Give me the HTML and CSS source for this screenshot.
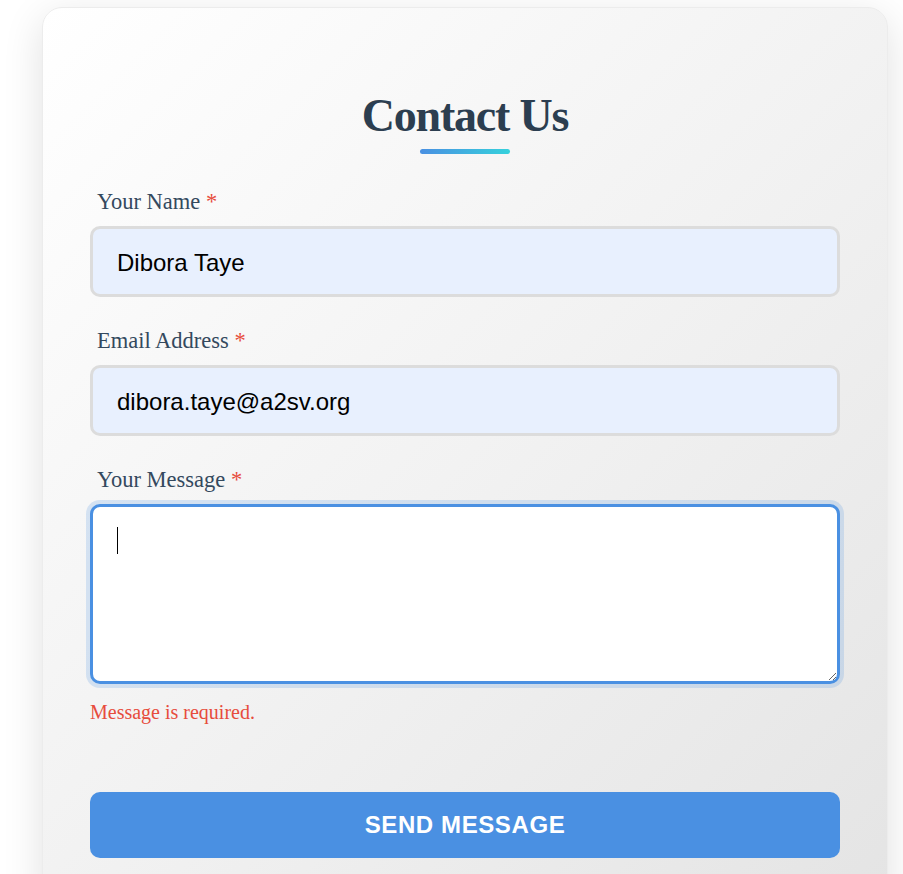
FILE: index.html
```html
<!DOCTYPE html>
<html lang="en">
<head>
<meta charset="utf-8">
<title>Contact Us</title>
<link rel="stylesheet" href="styles.css">
</head>
<body>
<div class="page">
  <div class="card">
    <h1 class="title">Contact Us</h1>
    <div class="title-bar"></div>
    <form class="form" novalidate>
      <div class="group">
        <label class="label" for="name">Your Name <span class="req">*</span></label>
        <input class="field autofilled" id="name" type="text" value="Dibora Taye">
      </div>
      <div class="group">
        <label class="label" for="email">Email Address <span class="req">*</span></label>
        <input class="field autofilled" id="email" type="email" value="dibora.taye@a2sv.org">
      </div>
      <div class="group group-msg">
        <label class="label" for="msg">Your Message <span class="req">*</span></label>
        <div class="area-wrap">
          <textarea class="field area focused" id="msg"></textarea>
          <span class="caret"></span>
        </div>
        <p class="error">Message is required.</p>
      </div>
      <button class="btn" type="button">SEND MESSAGE</button>
    </form>
  </div>
</div>
</body>
</html>
```
FILE: styles.css
```css
* { box-sizing: border-box; }
html, body { margin: 0; padding: 0; background: #ffffff; overflow: hidden; }
.page {
  padding: 7px 15px 0 42px;
  height: 874px;
}
.card {
  width: 846px;
  height: 900px;
  border-radius: 20px;
  background: linear-gradient(135deg, #ffffff 0%, #f2f2f2 50%, #e4e4e4 100%);
  box-shadow: 0 10px 40px rgba(0, 0, 0, 0.12);
  border: 1px solid #ececec;
  padding: 80px 47px 0 47px;
}
.title {
  margin: 0;
  text-align: center;
  font-family: "Liberation Serif", "Times New Roman", serif;
  font-weight: bold;
  font-size: 46px;
  letter-spacing: -1.2px;
  line-height: 55px;
  color: #2c3e50;
}
.title-bar {
  width: 90px;
  height: 5px;
  margin: 6px auto 0;
  border-radius: 3px;
  background: linear-gradient(90deg, #4a90e2, #36d1dc);
}
.form { margin-top: 35px; }
.group { margin-bottom: 31px; }
.label {
  display: block;
  padding-left: 7px;
  margin-bottom: 12px;
  font-family: "Liberation Serif", "Times New Roman", serif;
  font-size: 22.5px;
  line-height: 25px;
  color: #34495e;
}
.req { color: #e74c3c; }
.field {
  display: block;
  width: 750px;
  height: 71px;
  border: 3px solid #dcdcdc;
  border-radius: 10px;
  padding: 2px 24px 0;
  font-family: "Liberation Sans", Arial, sans-serif;
  font-size: 24px;
  color: #000;
  outline: none;
}
.autofilled { background: #e8f0fe; }
.area-wrap { position: relative; }
.area {
  height: 180px;
  background: #ffffff;
  border-color: #4a90e2;
  box-shadow: 0 0 0 4px rgba(74, 144, 226, 0.2);
  resize: vertical;
  padding: 20px 24px;
  caret-color: transparent;
}
.caret {
  position: absolute;
  left: 27px;
  top: 23px;
  width: 1px;
  height: 27px;
  background: #000;
}
.group-msg { margin-bottom: 0; }
.error {
  margin: 17px 0 0;
  font-family: "Liberation Serif", "Times New Roman", serif;
  font-size: 20px;
  line-height: 23px;
  color: #e74c3c;
}
.btn {
  display: block;
  margin-top: 68px;
  width: 750px;
  height: 66px;
  border: none;
  border-radius: 10px;
  background: #4a90e2;
  color: #ffffff;
  font-family: "Liberation Sans", Arial, sans-serif;
  font-weight: bold;
  font-size: 24px;
  letter-spacing: 0.6px;
}
```
